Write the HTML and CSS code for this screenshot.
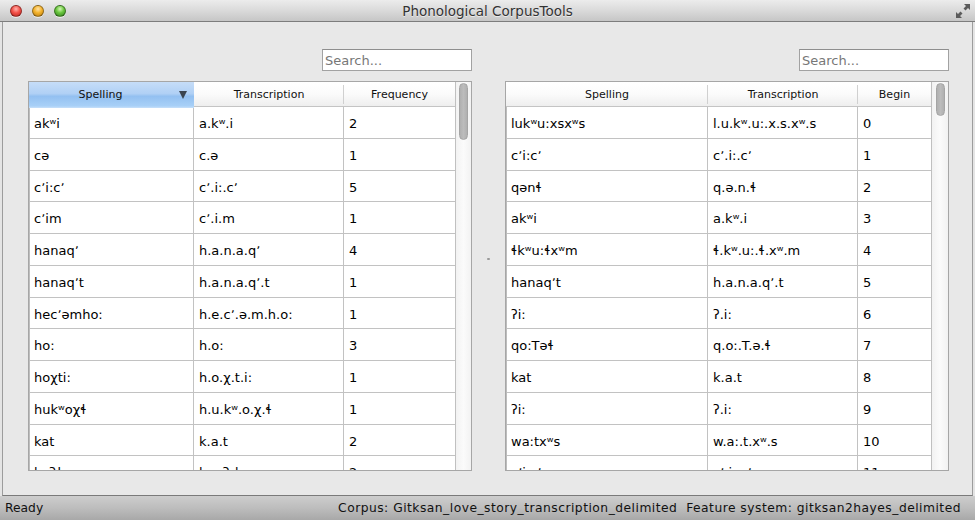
FILE: index.html
```html
<!DOCTYPE html>
<html>
<head>
<meta charset="utf-8">
<title>Phonological CorpusTools</title>
<link rel="stylesheet" href="styles.css">
</head>
<body>
<div class="app">
  <div class="titlebar">
    <div class="lights">
      <span class="light red"></span>
      <span class="light orange"></span>
      <span class="light green"></span>
    </div>
    <div class="title">Phonological CorpusTools</div>
    <div class="tb-right">
      <svg class="fs" width="16" height="16" viewBox="0 0 16 16">
        <polygon points="15,1 9,1 11,3 8.5,5.5 10.5,7.5 13,5 15,7" fill="#5b5b5b"/>
        <polygon points="1,15 1,9 3,11 5.5,8.5 7.5,10.5 5,13 7,15" fill="#5b5b5b"/>
      </svg>
    </div>
  </div>
  <div class="window">
    <div class="pane">
      <div class="searchrow"><div class="search">Search...</div></div>
      <div class="table left">
        <div class="tview">
          <div class="thead">
            <div class="th sel">Spelling<span class="sortarrow"></span></div>
            <div class="th sep">Transcription</div>
            <div class="th">Frequency</div>
          </div>
          <div class="tbody">
            <div class="td">akʷi</div><div class="td">a.kʷ.i</div><div class="td">2</div>
            <div class="td">cə</div><div class="td">c.ə</div><div class="td">1</div>
            <div class="td">cʼi:cʼ</div><div class="td">cʼ.i:.cʼ</div><div class="td">5</div>
            <div class="td">cʼim</div><div class="td">cʼ.i.m</div><div class="td">1</div>
            <div class="td">hanaqʼ</div><div class="td">h.a.n.a.qʼ</div><div class="td">4</div>
            <div class="td">hanaqʼt</div><div class="td">h.a.n.a.qʼ.t</div><div class="td">1</div>
            <div class="td">hecʼəmho:</div><div class="td">h.e.cʼ.ə.m.h.o:</div><div class="td">1</div>
            <div class="td">ho:</div><div class="td">h.o:</div><div class="td">3</div>
            <div class="td">hoχti:</div><div class="td">h.o.χ.t.i:</div><div class="td">1</div>
            <div class="td">hukʷoχɬ</div><div class="td">h.u.kʷ.o.χ.ɬ</div><div class="td">1</div>
            <div class="td">kat</div><div class="td">k.a.t</div><div class="td">2</div>
            <div class="td">kaʔɬ</div><div class="td">k.a.ʔ.ɬ</div><div class="td">2</div>
          </div>
        </div>
        <div class="vscroll"><div class="thumb tall"></div></div>
      </div>
    </div>
    <div class="splitter"><span class="grip"></span></div>
    <div class="pane">
      <div class="searchrow"><div class="search">Search...</div></div>
      <div class="table right">
        <div class="tview">
          <div class="thead">
            <div class="th sep">Spelling</div>
            <div class="th sep">Transcription</div>
            <div class="th">Begin</div>
          </div>
          <div class="tbody">
            <div class="td">lukʷu:xsxʷs</div><div class="td">l.u.kʷ.u:.x.s.xʷ.s</div><div class="td">0</div>
            <div class="td">cʼi:cʼ</div><div class="td">cʼ.i:.cʼ</div><div class="td">1</div>
            <div class="td">qənɬ</div><div class="td">q.ə.n.ɬ</div><div class="td">2</div>
            <div class="td">akʷi</div><div class="td">a.kʷ.i</div><div class="td">3</div>
            <div class="td">ɬkʷu:ɬxʷm</div><div class="td">ɬ.kʷ.u:.ɬ.xʷ.m</div><div class="td">4</div>
            <div class="td">hanaqʼt</div><div class="td">h.a.n.a.qʼ.t</div><div class="td">5</div>
            <div class="td">ʔi:</div><div class="td">ʔ.i:</div><div class="td">6</div>
            <div class="td">qo:Təɬ</div><div class="td">q.o:.T.ə.ɬ</div><div class="td">7</div>
            <div class="td">kat</div><div class="td">k.a.t</div><div class="td">8</div>
            <div class="td">ʔi:</div><div class="td">ʔ.i:</div><div class="td">9</div>
            <div class="td">wa:txʷs</div><div class="td">w.a:.t.xʷ.s</div><div class="td">10</div>
            <div class="td">cʼi:cʼ</div><div class="td">cʼ.i:.cʼ</div><div class="td">11</div>
          </div>
        </div>
        <div class="vscroll"><div class="thumb short"></div></div>
      </div>
    </div>
  </div>
  <div class="statusbar">
    <span class="st-left">Ready</span>
    <span class="st-right">Corpus: Gitksan_love_story_transcription_delimited&nbsp; Feature system: gitksan2hayes_delimited</span>
  </div>
</div>
</body>
</html>
```

FILE: styles.css
```css
html, body {
  margin: 0;
  padding: 0;
  background: #e4e4e4;
}
body {
  width: 975px;
  height: 520px;
  overflow: hidden;
  font-family: "DejaVu Sans", "Noto Sans", sans-serif;
  color: #000;
}
.app {
  display: flex;
  flex-direction: column;
  width: 975px;
  height: 520px;
}
.titlebar {
  height: 21px;
  border-bottom: 1px solid #7d7d7d;
  background: linear-gradient(to bottom, #ececec 0%, #dadada 50%, #c6c6c6 100%);
  display: grid;
  grid-template-columns: 1fr auto 1fr;
  align-items: center;
}
.lights {
  display: flex;
  gap: 10px;
  padding-left: 10px;
}
.light {
  width: 12px;
  height: 12px;
  border-radius: 50%;
  box-sizing: border-box;
  border: 1px solid rgba(0,0,0,0.35);
  box-shadow: 0 1px 0 rgba(255,255,255,0.6);
}
.light.red { background: radial-gradient(circle at 50% 30%, #ffb3ad 0%, #f4524a 45%, #b8231c 100%); }
.light.orange { background: radial-gradient(circle at 50% 30%, #ffe2a6 0%, #f4b32c 45%, #b57a10 100%); }
.light.green { background: radial-gradient(circle at 50% 30%, #d4f7b5 0%, #69c63e 45%, #347f1e 100%); }
.title {
  font-size: 13.5px;
  color: #333;
  text-shadow: 0 1px 0 rgba(255,255,255,0.6);
  line-height: 21px;
  padding-top: 1px;
}
.tb-right {
  display: flex;
  justify-content: flex-end;
  padding-right: 4px;
}
.fs { display: block; }

.window {
  flex: 0 0 auto;
  height: 474px;
  margin-left: 2px;
  width: 971px;
  border-left: 1px solid #9c9c9c;
  border-right: 1px solid #9c9c9c;
  border-bottom: 1px solid #7a7a7a;
  background: #e8e8e8;
  padding: 27px 23px 0 25px;
  box-sizing: border-box;
  display: flex;
}
.pane {
  width: 444px;
  display: flex;
  flex-direction: column;
}
.searchrow {
  display: flex;
  justify-content: flex-end;
  margin-bottom: 10px;
}
.search {
  width: 150px;
  height: 22px;
  box-sizing: border-box;
  border: 1px solid #a2a2a2;
  border-top-color: #8e8e8e;
  background: #fff;
  font-size: 13px;
  line-height: 21px;
  color: #777;
  padding-left: 2px;
}
.splitter {
  width: 33px;
  display: flex;
  align-items: center;
  justify-content: center;
}
.grip {
  width: 3px;
  height: 2px;
  background: #9a9a9a;
  border-radius: 1px;
  margin-top: -26px;
}
.table {
  height: 390px;
  box-sizing: border-box;
  border: 1px solid #a6a6a6;
  display: flex;
  background: #fff;
  overflow: hidden;
}
.tview {
  flex: 1 1 auto;
  overflow: hidden;
  display: flex;
  flex-direction: column;
}
.thead {
  display: grid;
  height: 25px;
  box-sizing: border-box;
  border-bottom: 1px solid #c4c4c4;
  background: linear-gradient(to bottom, #ffffff 0%, #fbfbfb 50%, #eeeeee 100%);
}
.left .thead { grid-template-columns: 165px 150px 111px; }
.right .thead { grid-template-columns: 202px 150px 73px; }
.th {
  position: relative;
  font-size: 11px;
  color: #111;
  text-align: center;
  line-height: 25px;
  white-space: nowrap;
}
.th.sep::after {
  content: "";
  position: absolute;
  right: 0;
  top: 3px;
  bottom: 3px;
  width: 1px;
  background: #d0d0d0;
}
.th.sel {
  background: linear-gradient(to bottom, #c6ddf8 0%, #b0d0f5 45%, #93c0f1 55%, #a8d0f7 92%, #c8e0fa 100%);
  margin-bottom: -1px;
  padding-right: 22px;
}
.sortarrow {
  position: absolute;
  right: 7px;
  top: 9px;
  width: 0;
  height: 0;
  border-left: 4.5px solid transparent;
  border-right: 4.5px solid transparent;
  border-top: 8px solid #3a4450;
}
.tbody {
  display: grid;
  grid-auto-rows: 31.75px;
  border-left: 1px solid #bdbdbd;
}
.left .tbody { grid-template-columns: 164px 150px 111px; }
.right .tbody { grid-template-columns: 201px 150px 73px; }
.td {
  box-sizing: border-box;
  border-bottom: 1px solid #c2c2c2;
  border-right: 1px solid #c2c2c2;
  font-size: 13px;
  line-height: 30px;
  padding-top: 2px;
  padding-left: 5px;
  white-space: nowrap;
  overflow: hidden;
}
.td:nth-child(3n+1) { padding-left: 4px; }
.td:nth-child(3n) { border-right: none; }
.vscroll {
  border-left: 1px solid #c0c0c0;
  background: linear-gradient(to right, #f2f2f2 0%, #fbfbfb 50%, #f2f2f2 100%);
  display: flex;
  justify-content: center;
  padding-top: 1px;
}
.left .vscroll { width: 15px; }
.right .vscroll { width: 16px; }
.thumb {
  width: 9px;
  box-sizing: border-box;
  border: 1px solid #a5a5a5;
  border-radius: 5px;
  background: linear-gradient(to right, #b0b0b0, #bcbcbc 50%, #b0b0b0);
}
.thumb.tall { height: 57px; }
.thumb.short { height: 33px; }

.statusbar {
  flex: 1 1 auto;
  display: flex;
  justify-content: space-between;
  align-items: center;
  background: linear-gradient(to bottom, #cdcdcd 0%, #bdbdbd 50%, #a8a8a8 100%);
  padding: 0 14px 0 5px;
  font-size: 12.3px;
  color: #111;
  white-space: nowrap;
}
.st-right { letter-spacing: 0.48px; }
```
